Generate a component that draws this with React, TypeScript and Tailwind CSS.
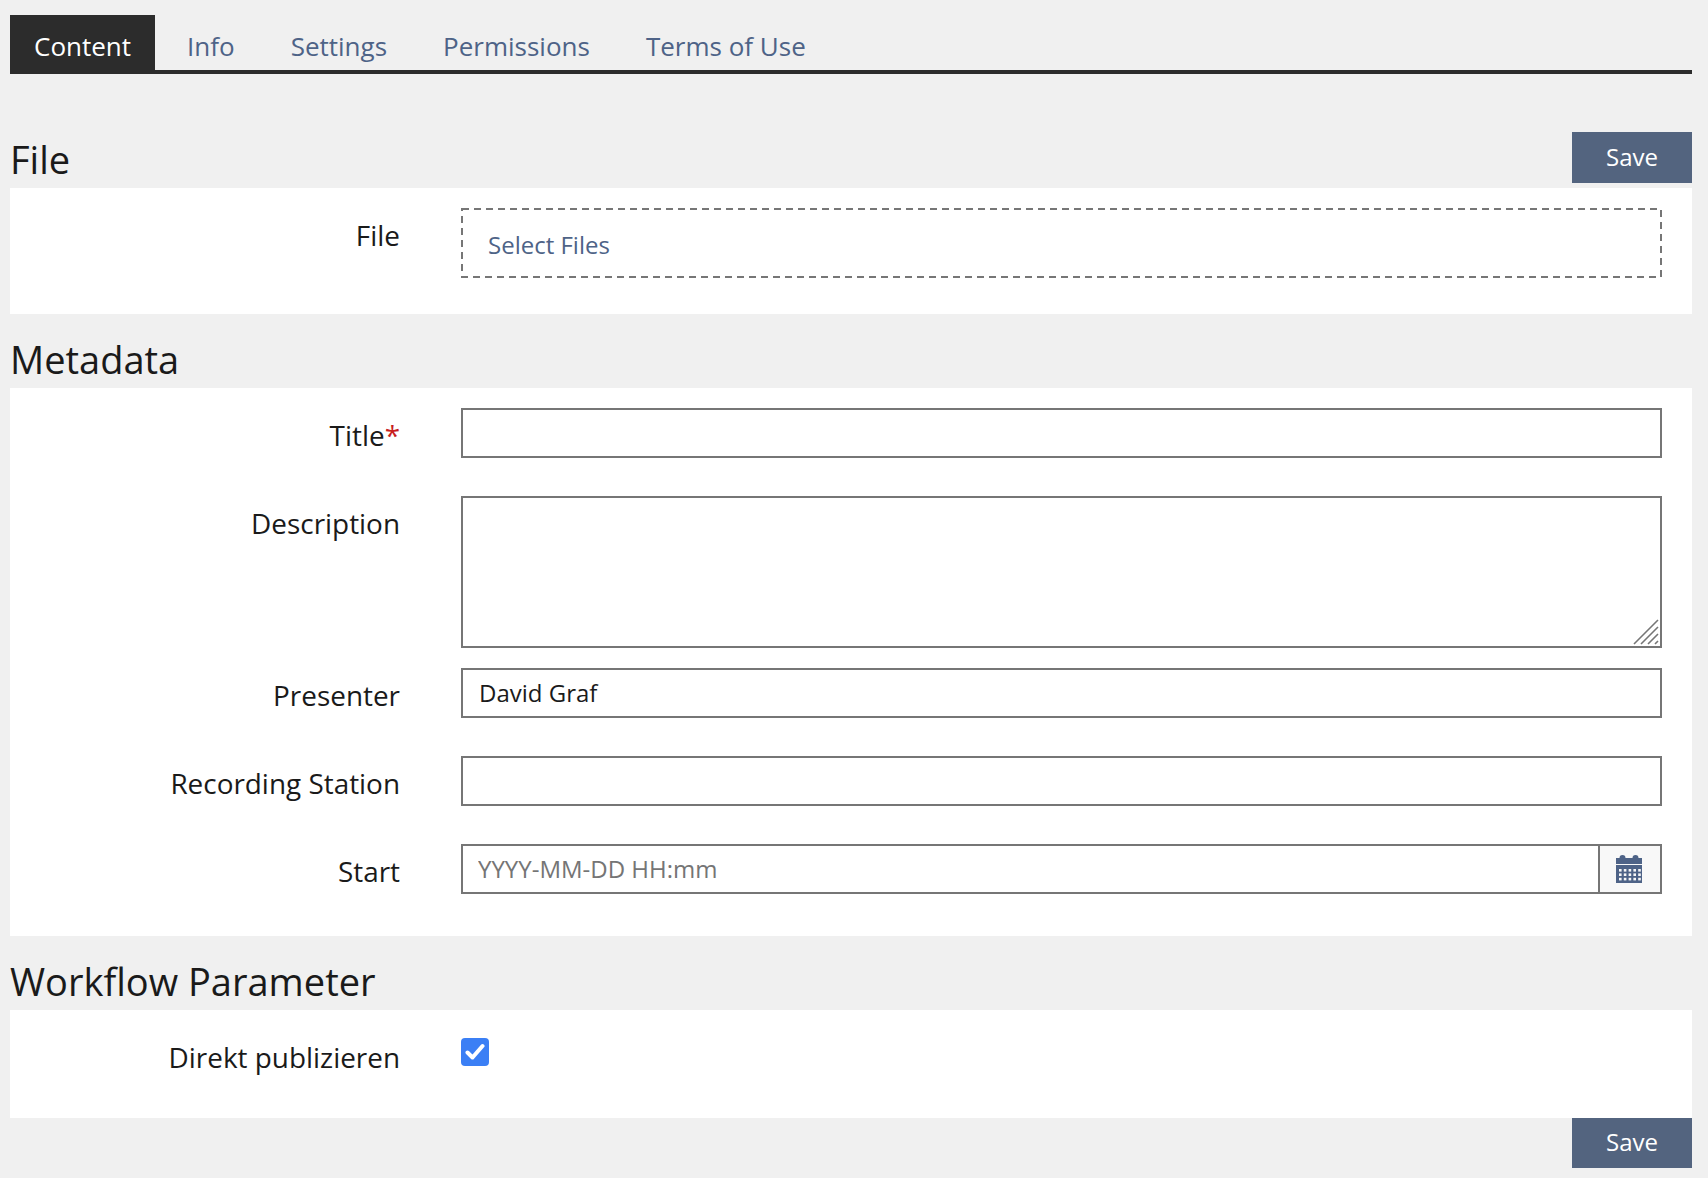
const fieldClass =
  "block w-full h-[50px] border-2 border-[#767676] bg-white px-[16px] pb-[2px] text-[24px] text-[#1a1a1a] outline-none placeholder:text-[#757575]";

function Label({ text, required }: { text: string; required?: boolean }) {
  return (
    <label className="w-[390px] shrink-0 pt-[7px] text-right text-[27.9px] leading-[40px] text-[#1a1a1a]">
      {text}
      {required && <span className="text-[#c81e1e]">*</span>}
    </label>
  );
}

function Heading({ children }: { children: string }) {
  return <h2 className="text-[38px] leading-[48px] font-normal text-[#1a1a1a]">{children}</h2>;
}

function SaveButton({ short }: { short?: boolean }) {
  return (
    <button className={short ? "h-[50px] w-[120px] bg-[#53647f] pb-[2px] text-[24px] text-white" : "h-[51px] w-[120px] bg-[#53647f] pb-[2px] text-[24px] text-white"}>
      Save
    </button>
  );
}

function CalendarIcon() {
  const cells = [];
  for (let row = 0; row < 3; row++) {
    for (let col = 0; col < 5; col++) {
      cells.push(<rect key={`${row}-${col}`} x={3 + col * 4.8} y={14 + row * 4.4} width="2.6" height="2.6" fill="#f8f8f8" />);
    }
  }
  return (
    <svg width="26" height="28" viewBox="0 0 26 28">
      <path d="M0 3h3.5a3 3 0 0 1 6 0h7a3 3 0 0 1 6 0H26v6H0z" fill="#4e6387" />
      <rect x="0" y="10" width="26" height="18" fill="#4e6387" />
      {cells}
    </svg>
  );
}

export default function App() {
  const tabs = ["Info", "Settings", "Permissions", "Terms of Use"];

  return (
    <div className="min-h-[1178px] bg-[#f0f0f0] pl-[10px] pr-[16px] font-['Open_Sans',sans-serif]">
      {/* Tabs */}
      <div className="flex h-[74px] gap-[8px] border-b-4 border-[#2c2c2c] pt-[15px]">
        <a className="flex h-[55px] items-center bg-[#2c2c2c] px-[24px] pt-[8px] text-[26px] text-white">Content</a>
        {tabs.map((tab) => (
          <a key={tab} className="flex h-[55px] items-center px-[24px] pt-[8px] text-[26px] text-[#4e6387]">
            {tab}
          </a>
        ))}
      </div>

      {/* File */}
      <div className="flex h-[114px] items-end justify-between pb-[5px]">
        <Heading>File</Heading>
        <SaveButton />
      </div>
      <section className="bg-white pt-[20px] pb-[36px]">
        <div className="flex">
          <Label text="File" />
          <div className="relative ml-[61px] flex h-[70px] w-[1201px] items-center pl-[27px] pt-[4px] text-[24px] text-[#4e6387]">
            Select Files
            <svg className="absolute top-0 left-0" width="1201" height="70" viewBox="0 0 1201 70">
              <rect x="1" y="1" width="1199" height="68" fill="none" stroke="#767676" strokeWidth="2" strokeDasharray="7 5" />
            </svg>
          </div>
        </div>
      </section>

      {/* Metadata */}
      <div className="flex h-[74px] items-end pb-[5px]">
        <Heading>Metadata</Heading>
      </div>
      <section className="bg-white pt-[20px] pb-[42px]">
        <div className="mb-[38px] flex">
          <Label text="Title" required />
          <div className="ml-[61px] w-[1201px]">
            <input className={fieldClass} />
          </div>
        </div>
        <div className="mb-[20px] flex">
          <Label text="Description" />
          <div className="relative ml-[61px] w-[1201px]">
            <textarea className="block h-[152px] w-full resize-none border-2 border-[#767676] bg-white outline-none" />
            <svg className="absolute right-[3px] bottom-[3px]" width="26" height="26" viewBox="0 0 26 26">
              <path d="M1 25 25 1M8 25 25 8M15 25 25 15M22 25 25 22" stroke="#767676" strokeWidth="1.6" fill="none" />
            </svg>
          </div>
        </div>
        <div className="mb-[38px] flex">
          <Label text="Presenter" />
          <div className="ml-[61px] w-[1201px]">
            <input className={fieldClass} defaultValue="David Graf" />
          </div>
        </div>
        <div className="mb-[38px] flex">
          <Label text="Recording Station" />
          <div className="ml-[61px] w-[1201px]">
            <input className={fieldClass} />
          </div>
        </div>
        <div className="flex">
          <Label text="Start" />
          <div className="ml-[61px] flex h-[50px] w-[1201px] border-2 border-[#767676]">
            <input
              className="min-w-0 flex-1 bg-white px-[15px] pb-[1px] text-[24px] outline-none placeholder:text-[#757575]"
              placeholder="YYYY-MM-DD HH:mm"
            />
            <button className="flex w-[62px] items-center justify-center border-l-2 border-[#767676] bg-[#f8f8f8] pr-[2px]">
              <CalendarIcon />
            </button>
          </div>
        </div>
      </section>

      {/* Workflow */}
      <div className="flex h-[74px] items-end pb-[5px]">
        <Heading>Workflow Parameter</Heading>
      </div>
      <section className="h-[108px] bg-white pt-[20px]">
        <div className="flex">
          <Label text="Direkt publizieren" />
          <div className="ml-[61px] mt-[8px] flex size-[28px] items-center justify-center rounded-[4px] bg-[#3b7ff5]">
            <svg width="20" height="18" viewBox="0 0 20 18">
              <path d="M2.5 9.5 7.5 14.5 17.5 3" stroke="#fff" strokeWidth="4" fill="none" strokeLinecap="round" strokeLinejoin="round" />
            </svg>
          </div>
        </div>
      </section>
      <div className="flex justify-end">
        <SaveButton short />
      </div>
    </div>
  );
}
